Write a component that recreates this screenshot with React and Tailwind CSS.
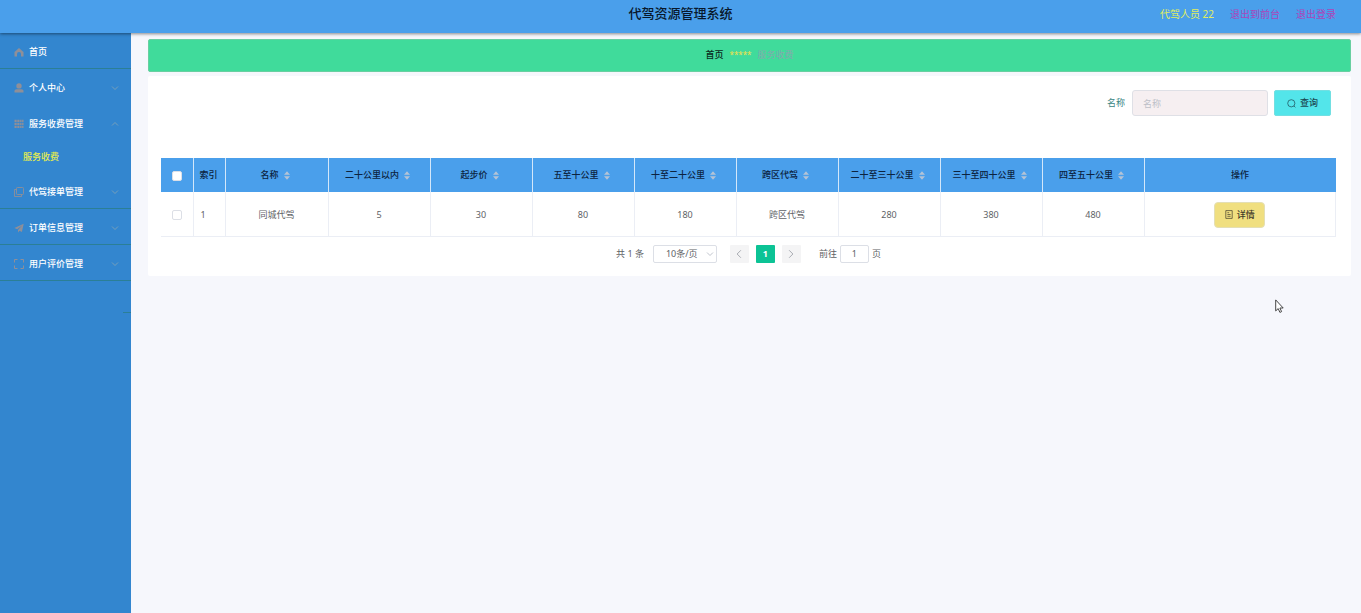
import React from 'react';

const columns = [
  { label: '名称', value: '同城代驾' },
  { label: '二十公里以内', value: '5' },
  { label: '起步价', value: '30' },
  { label: '五至十公里', value: '80' },
  { label: '十至二十公里', value: '180' },
  { label: '跨区代驾', value: '跨区代驾' },
  { label: '二十至三十公里', value: '280' },
  { label: '三十至四十公里', value: '380' },
  { label: '四至五十公里', value: '480' },
];

function HomeIcon() {
  return (
    <svg viewBox="0 0 10 10" className="size-[10px]" fill="currentColor" aria-hidden="true">
      <path d="M5 1 9.500 5v4.500H7V7a2 2 0 0 0-4 0v2.500H.5V5z" />
    </svg>
  );
}

function UserIcon() {
  return (
    <svg viewBox="0 0 10 10" className="size-[10px]" fill="currentColor" aria-hidden="true">
      <circle cx="5" cy="2.900" r="2.700" />
      <path d="M.5 9.500V8C.5 6.900 1.400 6.200 2.700 6.200H7.300C8.600 6.200 9.500 6.900 9.500 8V9.500z" />
    </svg>
  );
}

function GridIcon() {
  return (
    <svg viewBox="0 0 10 10" className="size-[10px]" fill="currentColor" aria-hidden="true">
      <path d="M.5.700h2.200v2.300H.5zM3.300.700h2.200v2.300H3.300zM6.100.700h1.500v2.300H6.100zM8.100.700h1.400v2.300H8.100zM.5 3.700h2.200V6H.5zM3.300 3.700h2.200V6H3.300zM6.100 3.700h1.500V6H6.100zM8.100 3.700h1.400V6H8.100zM.5 6.700h2.200V9H.5zM3.300 6.700h2.200V9H3.300zM6.100 6.700h1.500V9H6.100zM8.100 6.700h1.400V9H8.100z" />
    </svg>
  );
}

function CopyIcon() {
  return (
    <svg viewBox="0 0 10 10" className="size-[10px]" fill="none" stroke="currentColor" strokeWidth=".9" aria-hidden="true">
      <rect x="2.500" y=".5" width="7" height="7" rx=".8" />
      <path d="M2.500 2.500h-2v7h7v-2" />
    </svg>
  );
}

function SendIcon() {
  return (
    <svg viewBox="0 0 10 10" className="size-[10px]" fill="currentColor" aria-hidden="true">
      <path d="M9.700.700.400 5l2.800 1.300L8 2.400 4 6.900v2.600l1.500-1.700 2.400 1.100z" />
    </svg>
  );
}

function FrameIcon() {
  return (
    <svg viewBox="0 0 10 10" className="size-[10px]" fill="none" stroke="currentColor" strokeWidth="1" aria-hidden="true">
      <path d="M.5 3.500v-3h3M6.500.5h3v3M9.500 6.500v3h-3M3.500 9.500h-3v-3" />
    </svg>
  );
}

function Chevron({ className }) {
  return (
    <svg viewBox="0 0 8 8" className={className} fill="none" stroke="currentColor" strokeWidth=".8" aria-hidden="true">
      <path d="m1 2.500 3 3 3-3" />
    </svg>
  );
}

function SortIcon() {
  return (
    <svg viewBox="0 0 6 9" className="h-[9px] w-[6px] text-[#b4c3d6]" fill="currentColor" aria-hidden="true">
      <path d="M3 .3 6 3.800H0zM3 8.700 6 5.200H0z" />
    </svg>
  );
}

function MenuItem({ icon, label, arrow, line }) {
  return (
    <li className={`h-9 border-b ${line ? 'border-[#2b7f96]' : 'border-transparent'}`}>
      <a href="#" className="flex h-full items-center gap-[5px] pl-[14px] pr-3 pt-[2px] text-white">
        <span className="text-[#8f8f98]">{icon}</span>
        <span className="flex-1 font-medium">{label}</span>
        {arrow && (
          <Chevron className={arrow === 'up' ? 'size-2 rotate-180 text-[#86a5b4]' : 'size-2 text-[#86a5b4]'} />
        )}
      </a>
    </li>
  );
}

function Sidebar() {
  return (
    <nav className="w-[131px] shrink-0 bg-[#3386cf] text-[9px]">
      <ul>
        <MenuItem icon={<HomeIcon />} label="首页" line />
        <MenuItem icon={<UserIcon />} label="个人中心" arrow="down" />
        <MenuItem icon={<GridIcon />} label="服务收费管理" arrow="up" />
        <li className="h-8">
          <a href="#" className="flex h-full items-center pl-[23px] font-medium text-[#e6ed4c]">服务收费</a>
        </li>
        <MenuItem icon={<CopyIcon />} label="代驾接单管理" arrow="down" line />
        <MenuItem icon={<SendIcon />} label="订单信息管理" arrow="down" line />
        <MenuItem icon={<FrameIcon />} label="用户评价管理" arrow="down" line />
        <li className="ml-auto h-8 w-2 border-b border-[#2b7f96]" />
      </ul>
    </nav>
  );
}

function CheckBox({ label }) {
  return (
    <input
      type="checkbox"
      aria-label={label}
      className="mx-auto block size-[10px] appearance-none rounded-[2px] border border-[#dcdfe6] bg-white"
    />
  );
}

function FeeTable() {
  return (
    <table className="w-full table-fixed border-collapse text-[9px]">
      <colgroup>
        <col className="w-8" />
        <col className="w-8" />
        <col className="w-[103px]" />
        {columns.slice(1).map((c) => (
          <col key={c.label} className="w-[102px]" />
        ))}
        <col />
      </colgroup>
      <thead>
        <tr className="h-[34px] bg-[#4a9feb] text-[#0c2340]">
          <th className="border-r border-[#d3e7fa] p-0 pt-[2px]"><CheckBox label="全选" /></th>
          <th className="border-r border-[#d3e7fa] p-0 pl-[6px] text-left font-medium">索引</th>
          {columns.map((c) => (
            <th key={c.label} className="border-r border-[#d3e7fa] p-0 font-medium">
              <button type="button" className="flex w-full items-center justify-center gap-[5px] pr-[3px]">
                {c.label}
                <SortIcon />
              </button>
            </th>
          ))}
          <th className="p-0 font-medium">操作</th>
        </tr>
      </thead>
      <tbody>
        <tr className="h-[44px] border-b border-[#ebeef5] text-[#606266]">
          <td className="border-r border-[#ebeef5] p-0 pt-[2px]"><CheckBox label="选择第1行" /></td>
          <td className="border-r border-[#ebeef5] p-0 pl-[7px] pt-[2px]">1</td>
          {columns.map((c) => (
            <td key={c.label} className="border-r border-[#ebeef5] p-0 pt-[2px] text-center">{c.value}</td>
          ))}
          <td className="border-r border-[#ebeef5] p-0 pt-[2px]">
            <button
              type="button"
              className="mx-auto flex h-[26px] w-[51px] items-center justify-center gap-1 rounded border border-[#e4dfb4] bg-[#f0df80] font-medium text-[#3f3b2a]"
            >
              <svg viewBox="0 0 8 9" className="h-[9px] w-2" fill="none" stroke="currentColor" strokeWidth=".7" aria-hidden="true">
                <path d="M.8.600h6.400v7.800H.8zM2.400 2.700h1.800M2.400 4.500h3.200M2.400 6.300h3.200" />
              </svg>
              详情
            </button>
          </td>
        </tr>
      </tbody>
    </table>
  );
}

function Pagination() {
  return (
    <div className="flex items-center justify-center text-[9px] text-[#606266]">
      <span className="mr-[9px]">共 1 条</span>
      <div className="relative mr-[13px]">
        <select
          aria-label="每页条数"
          className="block h-[18px] w-16 appearance-none rounded-[2px] border border-[#dcdfe6] bg-white pl-3 leading-4"
        >
          <option>10条/页</option>
        </select>
        <Chevron className="pointer-events-none absolute right-[3px] top-[5px] size-2 text-[#b0b5c0]" />
      </div>
      <div className="flex gap-[7px]">
        <button type="button" aria-label="上一页" className="grid h-[18px] w-[19px] place-items-center rounded-[1px] bg-[#f4f4f5] text-[#a8abb2]">
          <Chevron className="size-[10px] rotate-90" />
        </button>
        <button type="button" className="h-[18px] w-[19px] rounded-[1px] bg-[#0cc395] font-bold text-white">1</button>
        <button type="button" aria-label="下一页" className="grid h-[18px] w-[19px] place-items-center rounded-[1px] bg-[#f4f4f5] text-[#a8abb2]">
          <Chevron className="size-[10px] -rotate-90" />
        </button>
      </div>
      <label className="ml-[18px] flex items-center gap-[3px]">
        前往
        <input
          type="text"
          aria-label="页码"
          defaultValue="1"
          className="h-[18px] w-[29px] rounded-[2px] border border-[#dcdfe6] bg-white text-center"
        />
        页
      </label>
    </div>
  );
}

export default function App() {
  return (
    <div className="relative flex min-h-screen flex-col bg-[#f6f7fc] font-['Noto_Sans','Noto_Sans_CJK_SC',sans-serif]">
      <header className="relative z-10 grid h-[33px] grid-cols-[1fr_auto_1fr] items-center bg-[#4a9feb] pb-[5px] shadow-[0_1px_3px_rgba(0,0,0,0.45)]">
        <h1 className="col-start-2 text-[13px] font-medium text-[#08182b]">代驾资源管理系统</h1>
        <div className="flex items-center justify-end gap-4 pr-[25px] text-[10px]">
          <span className="text-[#e1ee5c]">代驾人员 22</span>
          <a href="#" className="text-[#ab45ba]">退出到前台</a>
          <a href="#" className="text-[#ab45ba]">退出登录</a>
        </div>
      </header>
      <div className="flex flex-1">
        <Sidebar />
        <main className="min-w-0 flex-1 pl-[17px] pr-[10px] pt-[6px]">
          <div className="flex h-[33px] items-center justify-center gap-[6px] rounded-[2px] border border-[#69cfa1] bg-[#40db9b] pb-[2px] text-[9px]">
            <a href="#" className="font-medium text-[#0b2a1c]">首页</a>
            <span className="text-[8px] text-[#f0e04c]">*****</span>
            <span className="text-[#84a9ae]">服务收费</span>
          </div>
          <section className="mt-1 rounded-[2px] bg-white pb-[13px] pl-[13px] pr-[15px] pt-[14px]">
            <form className="mb-[42px] flex items-center justify-end pr-[5px] text-[9px]" onSubmit={(e) => e.preventDefault()}>
              <label htmlFor="name" className="mr-[7px] text-[#3a8583]">名称</label>
              <input
                id="name"
                type="text"
                placeholder="名称"
                className="mr-[6px] h-[26px] w-[136px] rounded-[3px] border border-[#dfe0e6] bg-[#f6eff1] px-[10px] placeholder:text-[#bdbfc8]"
              />
              <button
                type="submit"
                className="flex h-[26px] w-[57px] items-center justify-center gap-1 rounded-[2px] border border-[#72dfe2] bg-[#53e5ea] font-medium text-[#1d4b55]"
              >
                <svg viewBox="0 0 9 9" className="size-[9px]" fill="none" stroke="currentColor" strokeWidth=".7" aria-hidden="true">
                  <circle cx="4.300" cy="4.300" r="3.600" />
                  <path d="m6.900 6.900 1.500 1.500" />
                </svg>
                查询
              </button>
            </form>
            <FeeTable />
            <div className="mt-2">
              <Pagination />
            </div>
          </section>
        </main>
      </div>
      <svg viewBox="0 0 9 14" className="pointer-events-none absolute left-[1275px] top-[299px] h-[14px] w-[9px]" aria-hidden="true">
        <path d="M.7.900v11l2.500-2.300 1.700 3.800 1.700-.8-1.700-3.600h3.300z" fill="#fff" stroke="#333" strokeWidth=".9" />
      </svg>
    </div>
  );
}
